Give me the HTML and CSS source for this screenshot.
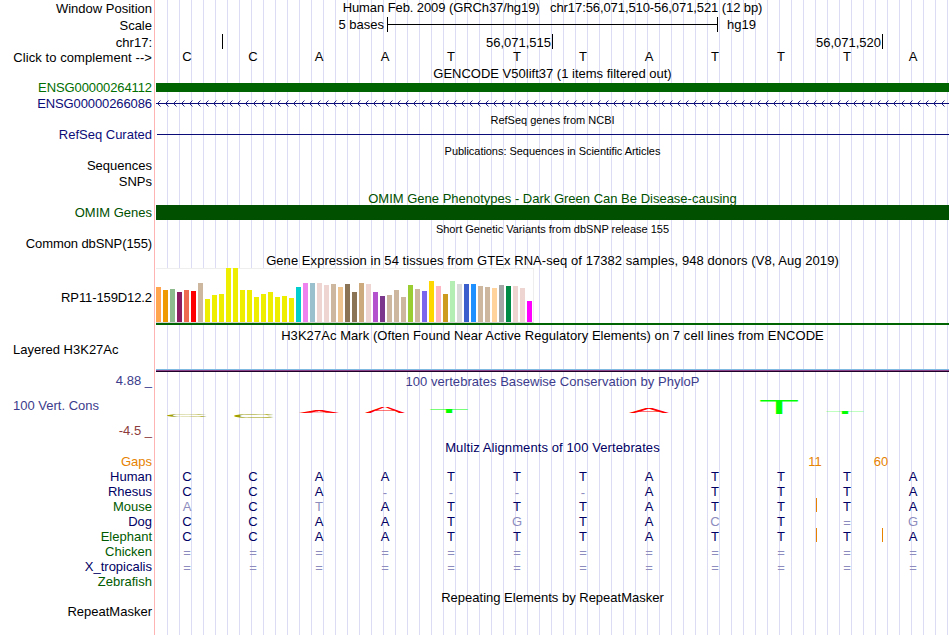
FILE: index.html
```html
<!DOCTYPE html>
<html lang="en">
<head>
  <meta charset="UTF-8" />
  <title>Human chr17:56,071,510-56,071,521</title>
  <link rel="stylesheet" href="styles.css">
</head>
<body>
<main class="browser">

  <div class="row position">
    <div class="label">Window Position</div>
    <div class="title pos-title">Human Feb. 2009 (GRCh37/hg19)&nbsp;&nbsp; chr17:56,071,510-56,071,521 (12 bp)</div>
  </div>
  <div class="row ruler">
    <div class="label">Scale</div>
    <div class="data scale">
      <span class="scale-text">5 bases</span>
      <div class="scale-bar"></div>
      <span class="scale-db">hg19</span>
    </div>
  </div>
  <div class="row ruler chrom">
    <div class="label">chr17:</div>
    <div class="data ticks">
      <span class="tick first"></span>
      <span class="tick">56,071,515</span>
      <span class="tick">56,071,520</span>
    </div>
  </div>
  <div class="row complement">
    <div class="label wide">Click to complement --&gt;</div>
    <div class="data bases" data-seq="CCAATTTATTTA"></div>
  </div>

  <div class="row head gencode-head"><div class="title t-gencode">GENCODE V50lift37 (1 items filtered out)</div></div>
  <div class="row gene">
    <div class="label green tight">ENSG00000264112</div>
    <div class="data"><div class="exon"></div></div>
  </div>
  <div class="row gene">
    <div class="label navy tight">ENSG00000266086</div>
    <div class="data">
      <svg class="intron" width="793" height="7">
        <defs>
          <pattern id="arrow" x="1" y="0" width="8" height="7" patternUnits="userSpaceOnUse">
            <path d="M3.5 0.5L0.5 3.5L3.5 6.5" fill="none" stroke="#0c0c78" stroke-width="0.9"/>
          </pattern>
        </defs>
        <rect y="3" width="793" height="1" fill="#0c0c78"/>
        <rect x="1" width="788" height="7" fill="url(#arrow)"/>
      </svg>
    </div>
  </div>

  <div class="row head small refseq-head"><div class="title">RefSeq genes from NCBI</div></div>
  <div class="row">
    <div class="label navy">RefSeq Curated</div>
    <div class="data"><div class="refseq-line"></div></div>
  </div>

  <div class="row head small low"><div class="title t-pubs">Publications: Sequences in Scientific Articles</div></div>
  <div class="row pubs"><div class="label">Sequences</div></div>
  <div class="row snps"><div class="label">SNPs</div></div>

  <div class="row head omim-head"><div class="title omim">OMIM Gene Phenotypes - Dark Green Can Be Disease-causing</div></div>
  <div class="row">
    <div class="label omim">OMIM Genes</div>
    <div class="data"><div class="omim-bar"></div></div>
  </div>

  <div class="row head small low"><div class="title">Short Genetic Variants from dbSNP release 155</div></div>
  <div class="row"><div class="label tight">Common dbSNP(155)</div></div>

  <div class="row head gtex-head"><div class="title t-gtex">Gene Expression in 54 tissues from GTEx RNA-seq of 17382 samples, 948 donors (V8, Aug 2019)</div></div>
  <div class="row gtex">
    <div class="label tight">RP11-159D12.2</div>
    <div class="data">
      <div class="tissues" id="tissues"></div>
      <div class="gene-model"></div>
    </div>
  </div>

  <div class="row head h3k-head"><div class="title t-h3k">H3K27Ac Mark (Often Found Near Active Regulatory Elements) on 7 cell lines from ENCODE</div></div>
  <div class="row h3k">
    <div class="label left">Layered H3K27Ac</div>
    <div class="data h3k-data"><div class="h3k-signal"></div></div>
  </div>

  <div class="row phylop">
    <div class="label limits">
      <span class="upper">4.88 _</span>
      <span class="name">100 Vert. Cons</span>
      <span class="lower">-4.5 _</span>
    </div>
    <div class="data">
      <div class="title upper t-phylop">100 vertebrates Basewise Conservation by PhyloP</div>
      <svg class="logo" width="793" height="48" id="logo"></svg>
    </div>
  </div>

  <div class="row head multiz-head"><div class="title species t-multiz">Multiz Alignments of 100 Vertebrates</div></div>
  <div class="row gaps">
    <div class="label gap">Gaps</div>
    <div class="data gap-counts"><span>11</span><span>60</span></div>
  </div>
  <div id="alignment"></div>

  <div class="row head rm-head"><div class="title">Repeating Elements by RepeatMasker</div></div>
  <div class="row"><div class="label">RepeatMasker</div></div>
</main>

<script>
  // median expression per tissue: [colour, bar height]
  const tissues = [
    ["#ffa54f", 35], ["#ee9a00", 32], ["#8fbc8f", 33], ["#8b1c62", 30], ["#ee6a50", 32], ["#ff0000", 31],
    ["#cdb79e", 39], ["#eeee00", 23], ["#eeee00", 27], ["#eeee00", 28], ["#eeee00", 54], ["#eeee00", 54],
    ["#eeee00", 32], ["#eeee00", 32], ["#eeee00", 25], ["#eeee00", 28], ["#eeee00", 30], ["#eeee00", 25],
    ["#eeee00", 26], ["#eeee00", 24], ["#00cdcd", 35], ["#ee82ee", 39], ["#9ac0cd", 39], ["#eed5d2", 39],
    ["#eed5d2", 37], ["#cdb79e", 38], ["#eec591", 35], ["#8b7355", 38], ["#8b7355", 30], ["#cdaa7d", 39],
    ["#eed5d2", 38], ["#b452cd", 30], ["#7a378b", 26], ["#cdb79e", 27], ["#cdb79e", 32], ["#cdb79e", 25],
    ["#9acd32", 37], ["#cdb79e", 33], ["#7a67ee", 31], ["#ffd700", 41], ["#ffb6c1", 36], ["#cd9b1d", 28],
    ["#b4eeb4", 41], ["#d9d9d9", 38], ["#3a5fcd", 38], ["#1e90ff", 38], ["#cdb79e", 36], ["#cdb79e", 35],
    ["#ffd39b", 34], ["#a6a6a6", 37], ["#008b45", 36], ["#eed5d2", 36], ["#eed5d2", 34], ["#ff00ff", 21]
  ];
  document.getElementById("tissues").innerHTML = tissues
    .map(([color, h]) => `<i style="background:${color};height:${h}px"></i>`).join("");

  // conservation letters: base, left, top, width, height, colour
  const letters = [
    ["C", 11, 22, 40, 3, "#a0a000"], ["C", 78, 21.7, 40, 4.3, "#a0a000"],
    ["A", 143, 18, 40, 3, "#ff0000"], ["A", 209, 15, 40, 6, "#ff0000"],
    ["T", 274, 17, 38, 4.2, "#00ff00"], ["A", 473, 16.6, 40, 4.4, "#ff0000"],
    ["T", 604, 8, 38, 14, "#00ff00"], ["T", 670, 18.7, 38, 2.8, "#00ff00"]
  ];
  // ink box of each glyph at font-size 100: left, width, height
  const ink = { A: [0.3, 66, 69], C: [5, 64, 71], T: [2, 57, 69] };
  document.getElementById("logo").innerHTML = letters.map(([b, x, y, w, h, color]) => {
    const [l, iw, ih] = ink[b];
    return `<text font-size="100" fill="${color}" transform="translate(${x} ${y + h}) scale(${w / iw} ${h / ih})" x="${-l}" y="0">${b}</text>`;
  }).join("");

  // lower case = differs from human, | = insert before the base
  const species = [
    ["Human", "navy2", "CCAATTTATTTA"],
    ["Rhesus", "navy2", "CCA----ATTTA"],
    ["Mouse", "green2", "aCtATTTATT|TA"],
    ["Dog", "navy2", "CCAATgTAcT=g"],
    ["Elephant", "green2", "CCAATTTATT|T|A"],
    ["Chicken", "green2", "============"],
    ["X_tropicalis", "navy2", "============"],
    ["Zebrafish", "green2", ""]
  ];
  document.getElementById("alignment").innerHTML = species.map(([name, cls, seq]) =>
    `<div class="row aln"><div class="label ${cls}">${name}</div><div class="data bases species" data-seq="${seq}"></div></div>`
  ).join("");

  document.querySelectorAll(".bases").forEach(el => {
    el.innerHTML = (el.dataset.seq.match(/\|?[^|]/g) || []).map(s => {
      const b = s.slice(-1);
      let cls = "base";
      if (/[a-z=-]/.test(b)) cls += " diff";
      if (/[=-]/.test(b)) cls += " eq";
      if (s[0] === "|") cls += " insert";
      return `<span class="${cls}">${b.toUpperCase()}</span>`;
    }).join("");
  });
</script>
</body>
</html>
```
FILE: styles.css
```css
body {
  margin: 0;
  background: #fff;
  color: #000;
  font-family: "Liberation Sans", Arial, Helvetica, sans-serif;
  font-size: 13px;
}
.browser {
  width: 949px;
  height: 635px;
  overflow: hidden;
  background:
    linear-gradient(#ffb4b4, #ffb4b4) 154px 0 / 1px 100% no-repeat,
    repeating-linear-gradient(to right, #dcdcf5 0 1px, transparent 1px 12px) 167px 0 / 782px 100% no-repeat;
}
.row {
  display: grid;
  grid-template-columns: 156px 793px;
  height: 15px;
  line-height: 15px;
  white-space: nowrap;
}
.label {
  grid-column: 1;
  padding-right: 4px;
  text-align: right;
}
.label.left {
  padding-left: 13px;
  text-align: left;
}
.tight { letter-spacing: -0.1px; }
.wide { letter-spacing: 0.08px; }
.title {
  grid-column: 2;
  text-align: center;
}
.data {
  grid-column: 2;
  min-width: 0;
}
.head {
  height: 16px;
  line-height: 16px;
}
.small {
  font-size: 11px;
}
.low { line-height: 18px; }
.green { color: #006e00; }
.navy { color: #0c0c78; }
.omim { color: #005000; }
.upper { color: #3c3c8c; }
.lower { color: #8c3c3c; }
.species, .navy2 { color: #000064; }
.green2 { color: #005a00; }
.gap { color: #e68200; }

/* position and ruler */
.position {
  height: 17px;
  line-height: 17px;
}
.pos-title {
  line-height: 15px;
  letter-spacing: -0.09px;
}
.ruler {
  height: 17px;
  line-height: 17px;
}
.chrom { height: 16px; }
.scale {
  display: flex;
  line-height: 15px;
}
.scale-text {
  width: 228px;
  margin-right: 3px;
  text-align: right;
}
.scale-bar {
  width: 329px;
  height: 15px;
  border: solid #000;
  border-width: 0 1px;
  background: linear-gradient(#000, #000) 0 7px / 100% 1px no-repeat;
}
.scale-db { margin-left: 9px; }
.ticks { display: flex; }
.tick {
  box-sizing: border-box;
  width: 330px;
  height: 15px;
  padding-right: 1px;
  border-right: 1px solid #000;
  text-align: right;
}
.tick.first { width: 67px; }
.bases {
  display: grid;
  grid-template-columns: repeat(12, 66px);
  margin-left: -2px;
  text-align: center;
}
.complement .bases { line-height: 13px; }
.gencode-head {
  height: 15px;
  line-height: 17px;
}

/* genes */
.gene { height: 16px; }
.exon {
  height: 9px;
  margin-top: 3px;
  background: #006400;
}
.intron {
  display: block;
  margin-top: 4px;
}
.refseq-head { height: 15px; }
.refseq-line {
  height: 1px;
  margin: 7px 0 0 1px;
  background: #0c0c78;
}
.t-pubs { letter-spacing: -0.04px; }
.pubs, .snps { height: 16px; }
.omim-head {
  height: 15px;
  line-height: 18px;
}
.omim-bar {
  height: 15px;
  background: #005000;
}

/* GTEx bar graph */
.gtex-head {
  height: 17px;
  line-height: 19px;
}
.t-gtex, .t-h3k { letter-spacing: 0.06px; }
.gtex {
  height: 57px;
  line-height: 59px;
}
.tissues {
  display: flex;
  align-items: flex-end;
  gap: 2px;
  box-sizing: border-box;
  width: 378px;
  height: 55px;
  border: solid #eee;
  border-width: 0 1px 0 0;
  border-bottom: 1px solid #d2d2d2;
  background: linear-gradient(#eee 1px, #fff 1px);
}
.tissues i {
  flex: none;
  width: 5px;
}
.gene-model {
  height: 2px;
  background: #006400;
}

/* layered H3K27Ac */
.h3k-head {
  height: 17px;
  line-height: 21px;
}
.h3k { height: 30px; }
.h3k-data {
  display: flex;
  align-items: flex-end;
}
.h3k-signal {
  width: 100%;
  height: 3px;
  background: linear-gradient(#7db9e1 0 1px, #8c468c 1px 2px, #1e0028 2px);
}

/* phyloP */
.phylop { height: 68px; }
.limits {
  display: flex;
  flex-direction: column;
  padding-top: 1px;
}
.limits .name {
  margin: 10px 0;
  padding-left: 13px;
  text-align: left;
  color: #3c3c8c;
}
.t-phylop {
  line-height: 19px;
  letter-spacing: 0.04px;
}
.logo {
  display: block;
  overflow: visible;
  margin-top: 1px;
}

/* multiz */
.multiz-head { height: 14px; }
.t-multiz { letter-spacing: 0.1px; }
.gap-counts {
  display: flex;
  padding-left: 626px;
  color: #e68200;
}
.gap-counts span {
  width: 66px;
  text-align: center;
}
.diff { color: #8c8cbe; }
.eq { line-height: 17px; }
.insert { position: relative; }
.insert::before {
  content: "";
  position: absolute;
  top: -1px;
  left: 2px;
  width: 1px;
  height: 14px;
  background: #e68200;
}
.rm-head {
  height: 15px;
  line-height: 18px;
}
```
